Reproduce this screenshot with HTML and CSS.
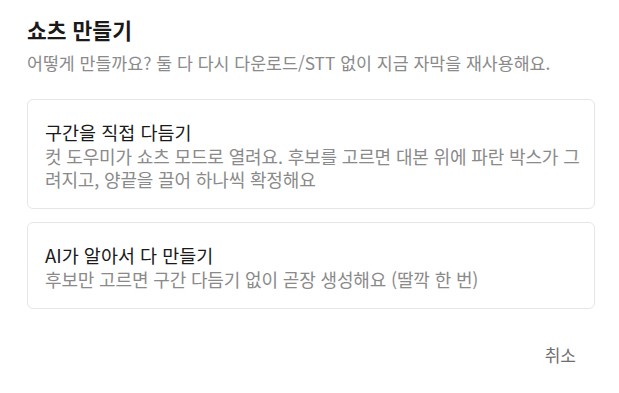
FILE: index.html
```html
<!DOCTYPE html>
<html lang="ko">
<head>
    <meta charset="UTF-8">
    <meta name="viewport" content="width=device-width, initial-scale=1.0">
    <title>쇼츠 만들기</title>
    <link rel="stylesheet" href="styles.css">
</head>
<body>
    <div class="dialog">
        <h2 class="dialog-title">쇼츠 만들기</h2>
        <p class="dialog-desc">어떻게 만들까요? 둘 다 다시 다운로드/STT 없이 지금 자막을 재사용해요.</p>

        <div class="options">
            <!-- Option 1 -->
            <button class="option">
                <span class="option-title">구간을 직접 다듬기</span>
                <span class="option-text">컷 도우미가 쇼츠 모드로 열려요. 후보를 고르면 대본 위에 파란 박스가 그려지고, 양끝을 끌어 하나씩 확정해요</span>
            </button>

            <!-- Option 2 -->
            <button class="option">
                <span class="option-title">AI가 알아서 다 만들기</span>
                <span class="option-text">후보만 고르면 구간 다듬기 없이 곧장 생성해요 (딸깍 한 번)</span>
            </button>
        </div>

        <div class="dialog-actions">
            <button class="btn-cancel">취소</button>
        </div>
    </div>
</body>
</html>
```

FILE: styles.css
```css
:root {
    --text: #1a1a1a;
    --muted: #8a8a8a;
    --border: #e6e6e6;
}

body {
    margin: 0;
    background: #ffffff;
    font-family: 'Noto Sans CJK KR', 'Noto Sans', sans-serif;
    color: var(--text);
}

.dialog {
    width: 568px;
    padding: 15px 24px 0 27px;
}

.dialog-title {
    margin: 0;
    font-size: 21.5px;
    line-height: 30px;
    font-weight: 700;
}

.dialog-desc {
    margin: 5px 0 0;
    font-size: 17.3px;
    line-height: 25px;
    color: var(--muted);
}

.options {
    display: flex;
    flex-direction: column;
    gap: 13px;
    margin-top: 24px;
}

.option {
    display: flex;
    flex-direction: column;
    padding: 19px 14px 17px 17px;
    background: #fff;
    border: 1px solid var(--border);
    border-radius: 6px;
    text-align: left;
    font-family: inherit;
    cursor: pointer;
}

.option-title {
    font-size: 18.5px;
    line-height: 26px;
    color: var(--text);
}

.option-text {
    font-size: 18px;
    line-height: 23px;
    letter-spacing: -0.15px;
    color: var(--muted);
}

.dialog-actions {
    display: flex;
    justify-content: flex-end;
    margin-top: 28px;
}

.btn-cancel {
    padding: 6px 19px;
    background: none;
    border: none;
    font-family: inherit;
    font-size: 17px;
    line-height: 24px;
    color: #6e6e6e;
    cursor: pointer;
}
```
